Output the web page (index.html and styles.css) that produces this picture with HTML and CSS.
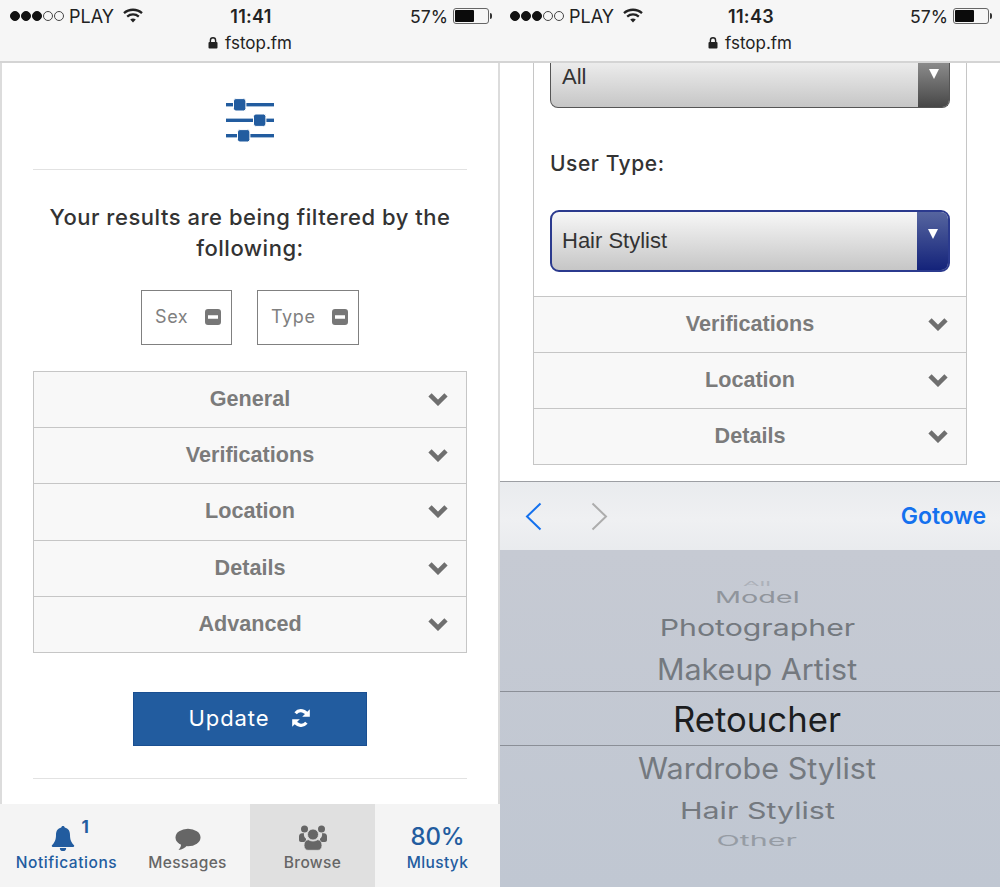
FILE: index.html
```html
<!DOCTYPE html>
<html lang="en">
<head>
<meta charset="utf-8">
<title>fstop.fm filters</title>
<link rel="stylesheet" href="styles.css">
</head>
<body>
<svg class="defs" width="0" height="0" aria-hidden="true">
  <defs>
    <symbol id="wifi" viewBox="0 0 20 15">
      <path d="M1 5.200C6 .6 14 .6 19 5.200" fill="none" stroke="currentColor" stroke-width="2.300"/>
      <path d="M4.200 8.600C7.500 5.700 12.500 5.700 15.800 8.600" fill="none" stroke="currentColor" stroke-width="2.300"/>
      <path d="M7.200 11.400C8.900 10.100 11.100 10.100 12.800 11.400L10 14.400Z" fill="currentColor"/>
    </symbol>
    <symbol id="lock" viewBox="0 0 10 12">
      <path d="M2.400 5V3.400a2.600 2.600 0 0 1 5.200 0V5" fill="none" stroke="currentColor" stroke-width="1.400"/>
      <rect x="0.500" y="5" width="9" height="6.600" rx="1" fill="currentColor"/>
    </symbol>
    <symbol id="chev" viewBox="0 0 20 14">
      <path d="M2 2.800 10 10.800 18 2.800" fill="none" stroke="currentColor" stroke-width="4.600"/>
    </symbol>
    <symbol id="minus" viewBox="0 0 16 16">
      <path fill-rule="evenodd" d="M3 0h10a3 3 0 0 1 3 3v10a3 3 0 0 1-3 3H3a3 3 0 0 1-3-3V3a3 3 0 0 1 3-3ZM3 6.300v3.400h10V6.300Z" fill="currentColor"/>
    </symbol>
  </defs>
</svg>

<main class="screens">
  <section class="phone">
    <header class="browser">
      <div class="status">
        <div class="status-left">
          <span class="signal"><i class="dot"></i><i class="dot"></i><i class="dot"></i><i class="dot off"></i><i class="dot off"></i></span>
          <span class="carrier">PLAY</span>
          <svg class="wifi"><use href="#wifi"/></svg>
        </div>
        <div class="clock">11:41</div>
        <div class="status-right">
          <span>57%</span>
          <span class="battery"><span class="battery-fill"></span></span>
          <span class="battery-tip"></span>
        </div>
      </div>
      <div class="url"><svg class="lock"><use href="#lock"/></svg><span>fstop.fm</span></div>
    </header>

    <div class="page">
      <div class="filter-icon">
        <svg width="48" height="46" viewBox="0 0 48 46">
          <g fill="#225c9f">
            <rect x="0" y="6" width="48" height="3.400"/>
            <rect x="0" y="21.600" width="48" height="3.400"/>
            <rect x="0" y="37" width="48" height="3.400"/>
            <rect x="7.500" y="1.600" width="12.400" height="12.400" rx="2.400" stroke="#fff" stroke-width="1"/>
            <rect x="27.500" y="17" width="12.400" height="12.400" rx="2.400" stroke="#fff" stroke-width="1"/>
            <rect x="11.500" y="32.600" width="12.400" height="12.400" rx="2.400" stroke="#fff" stroke-width="1"/>
          </g>
        </svg>
      </div>
      <hr class="rule">
      <h2 class="lead">Your results are being filtered by the following:</h2>
      <div class="tags">
        <div class="tag tag-sex"><span>Sex</span><svg class="minus"><use href="#minus"/></svg></div>
        <div class="tag tag-type"><span>Type</span><svg class="minus"><use href="#minus"/></svg></div>
      </div>
      <div class="accordion">
        <div class="acc-row"><span>General</span><svg class="chev"><use href="#chev"/></svg></div>
        <div class="acc-row"><span>Verifications</span><svg class="chev"><use href="#chev"/></svg></div>
        <div class="acc-row"><span>Location</span><svg class="chev"><use href="#chev"/></svg></div>
        <div class="acc-row"><span>Details</span><svg class="chev"><use href="#chev"/></svg></div>
        <div class="acc-row"><span>Advanced</span><svg class="chev"><use href="#chev"/></svg></div>
      </div>
      <button class="update" type="button">
        <span>Update</span>
        <svg width="20" height="20" viewBox="0 0 20 20">
          <path d="M16.600 7.600A7 7 0 0 0 4.600 5.200" fill="none" stroke="#fff" stroke-width="3.200"/>
          <path d="M18.800 1.200v7.600h-7.600Z" fill="#fff"/>
          <path d="M3.400 12.400a7 7 0 0 0 12 2.400" fill="none" stroke="#fff" stroke-width="3.200"/>
          <path d="M1.200 18.800v-7.600h7.600Z" fill="#fff"/>
        </svg>
      </button>
      <hr class="rule rule-bottom">
    </div>

    <nav class="tabbar">
      <div class="tab tab-active-blue">
        <div class="tab-icon">
          <svg width="24" height="25" viewBox="0 0 24 25">
            <path d="M12 0c1 0 1.700.7 1.700 1.600 3.600.8 5.300 3.600 5.300 7.400 0 5 1.400 7.400 4 10.200.5.600.2 1.800-.8 1.800H1.800c-1 0-1.300-1.200-.8-1.800C3.600 16.400 5 14 5 9c0-3.800 1.700-6.600 5.300-7.400C10.300.7 11 0 12 0Z" fill="#225c9f"/>
            <path d="M8.800 22h6.400a3.200 3.200 0 0 1-6.400 0Z" fill="#225c9f"/>
          </svg>
          <span class="badge">1</span>
        </div>
        <span class="tab-label tab-label-offset">Notifications</span>
      </div>
      <div class="tab">
        <div class="tab-icon">
          <svg width="26" height="23" viewBox="0 0 26 23">
            <ellipse cx="13" cy="9.500" rx="12.500" ry="8.800" fill="#666"/>
            <path d="M6 15c.5 3-.8 5-2.500 7 3.500-.5 6.500-2 8.500-4.500Z" fill="#666"/>
          </svg>
        </div>
        <span class="tab-label">Messages</span>
      </div>
      <div class="tab tab-current">
        <div class="tab-icon">
          <svg width="28" height="26" viewBox="0 0 28 26">
            <g fill="#666">
              <circle cx="5.500" cy="4" r="3.500"/><circle cx="22.500" cy="4" r="3.500"/>
              <path d="M0 11.500c0-2 1-3.300 3-3.300h2c-.5 2.500.5 4.300 2 5.500v3.300H2c-1.200 0-2-.8-2-2Z"/>
              <path d="M28 11.500c0-2-1-3.300-3-3.300h-2c.5 2.500-.5 4.300-2 5.500v3.300h5c1.200 0 2-.8 2-2Z"/>
              <circle cx="14" cy="9.500" r="5.500" stroke="#e0e0e0" stroke-width=".8"/>
              <path d="M5 20.500c0-3.500 1.500-5.800 4.500-5.800 2.800 1.800 6.200 1.800 9 0 3 0 4.500 2.300 4.500 5.800 0 3-1.800 4.800-4 4.800H9c-2.200 0-4-1.800-4-4.800Z" stroke="#e0e0e0" stroke-width=".8"/>
            </g>
          </svg>
        </div>
        <span class="tab-label">Browse</span>
      </div>
      <div class="tab tab-active-blue">
        <div class="tab-icon tab-score">80%</div>
        <span class="tab-label">Mlustyk</span>
      </div>
    </nav>
  </section>

  <section class="phone">
    <header class="browser">
      <div class="status">
        <div class="status-left">
          <span class="signal"><i class="dot"></i><i class="dot"></i><i class="dot"></i><i class="dot off"></i><i class="dot off"></i></span>
          <span class="carrier">PLAY</span>
          <svg class="wifi"><use href="#wifi"/></svg>
        </div>
        <div class="clock">11:43</div>
        <div class="status-right">
          <span>57%</span>
          <span class="battery"><span class="battery-fill"></span></span>
          <span class="battery-tip"></span>
        </div>
      </div>
      <div class="url"><svg class="lock"><use href="#lock"/></svg><span>fstop.fm</span></div>
    </header>

    <div class="form-page">
      <div class="form-panel">
        <div class="select select-gray">
          <span class="select-value">All</span>
          <span class="select-btn"><i class="tri"></i></span>
        </div>
        <div class="field-label">User Type:</div>
        <div class="select select-focus">
          <span class="select-value">Hair Stylist</span>
          <span class="select-btn"><i class="tri"></i></span>
        </div>
        <div class="panel-rows">
          <div class="acc-row"><span>Verifications</span><svg class="chev"><use href="#chev"/></svg></div>
          <div class="acc-row"><span>Location</span><svg class="chev"><use href="#chev"/></svg></div>
          <div class="acc-row"><span>Details</span><svg class="chev"><use href="#chev"/></svg></div>
        </div>
      </div>
    </div>

    <div class="toolbar">
      <svg class="nav-arrow prev" width="17" height="29" viewBox="0 0 17 29"><path d="M15.500 1.500 2 14.500l13.500 13" fill="none" stroke="currentColor" stroke-width="2"/></svg>
      <svg class="nav-arrow next" width="17" height="29" viewBox="0 0 17 29"><path d="M1.500 1.500 15 14.500l-13.500 13" fill="none" stroke="currentColor" stroke-width="2"/></svg>
      <span class="done">Gotowe</span>
    </div>

    <div class="picker">
      <div class="wheel">
        <div class="item i-all"><span>All</span></div>
        <div class="item i-model"><span>Model</span></div>
        <div class="item i-photo"><span>Photographer</span></div>
        <div class="item i-makeup"><span>Makeup Artist</span></div>
        <div class="item i-current"><span>Retoucher</span></div>
        <div class="item i-ward"><span>Wardrobe Stylist</span></div>
        <div class="item i-hair"><span>Hair Stylist</span></div>
        <div class="item i-other"><span>Other</span></div>
      </div>
    </div>
  </section>
</main>
</body>
</html>
```

FILE: styles.css
```css
* { box-sizing: border-box; }

html, body {
  margin: 0;
  padding: 0;
  height: 887px;
  overflow: hidden;
  background: #fff;
}

body {
  font-family: "Liberation Sans", Arial, sans-serif;
  color: #333;
}

.defs { display: block; height: 0; }

.screens {
  display: flex;
  width: 1000px;
  height: 887px;
}

.phone {
  width: 500px;
  height: 887px;
  display: flex;
  flex-direction: column;
  overflow: hidden;
}

/* Browser chrome */
.browser {
  flex: 0 0 63px;
  height: 63px;
  background: #f6f6f6;
  border-bottom: 2px solid #d4d4d4;
  padding: 4px 8px 0 10px;
  color: #222;
}

.status {
  display: grid;
  grid-template-columns: 1fr auto 1fr;
  align-items: center;
  height: 24px;
  font-family: Inter, "Liberation Sans", sans-serif;
  font-size: 18px;
}

.status-left { display: flex; align-items: center; }

.signal { display: flex; gap: 1px; margin-right: 5px; }

.dot {
  width: 10px;
  height: 10px;
  border-radius: 50%;
  background: #111;
  border: 1px solid #111;
}

.dot.off { background: transparent; border-color: #444; }

.carrier { font-weight: 400; }

.wifi { width: 20px; height: 15px; margin-left: 9px; margin-top: -2px; }

.clock { font-weight: 600; font-size: 18px; letter-spacing: .3px; }

.status-right {
  display: flex;
  align-items: center;
  justify-content: flex-end;
  font-size: 17.600px;
}

.battery {
  width: 36px;
  height: 16px;
  margin-left: 5px;
  border: 1px solid #666;
  border-radius: 3px;
  padding: 1px;
  display: block;
}

.battery-fill {
  display: block;
  width: 19px;
  height: 100%;
  background: #0b0b0b;
  border-radius: 1px;
}

.battery-tip {
  width: 2px;
  height: 6px;
  background: #333;
  border-radius: 0 2px 2px 0;
  margin-left: 1px;
}

.url {
  display: flex;
  justify-content: center;
  align-items: center;
  gap: 7px;
  height: 28px;
  padding-top: 2px;
  margin-left: -2px;
  font-family: Inter, "Liberation Sans", sans-serif;
  font-size: 17px;
}

.lock { width: 10px; height: 12px; }

/* Left page */
.page {
  flex: 1;
  min-height: 0;
  background: #fff;
  border-left: 2px solid #dcdcdc;
  border-right: 2px solid #dcdcdc;
  padding: 0 31px;
  font-family: Inter, "Liberation Sans", sans-serif;
}

.filter-icon {
  display: flex;
  justify-content: center;
  height: 106px;
  padding-top: 34px;
}

.rule {
  margin: 0;
  border: 0;
  height: 1px;
  background: #e2e2e2;
}

.lead {
  margin: 32px 0 26px;
  padding: 0;
  text-align: center;
  font-size: 22px;
  line-height: 31px;
  font-weight: 500;
  letter-spacing: .52px;
  color: #333;
}

.tags {
  display: flex;
  justify-content: center;
  gap: 25px;
  margin-bottom: 26px;
}

.tag {
  display: flex;
  align-items: center;
  justify-content: space-between;
  height: 55px;
  padding: 0 10px 2px 13px;
  border: 1px solid #808080;
  font-size: 18px;
  letter-spacing: .6px;
  color: #808080;
}

.tag-sex { width: 91px; }
.tag-type { width: 102px; }

.minus { width: 16px; height: 16px; color: #777; }

.accordion { border: 1px solid #c6c6c6; border-bottom: 0; }

.acc-row {
  position: relative;
  display: flex;
  align-items: center;
  justify-content: center;
  height: 56.200px;
  padding-bottom: 1px;
  background: #f8f8f8;
  border-bottom: 1px solid #c6c6c6;
  font-family: "Liberation Sans", Arial, sans-serif;
  font-weight: 700;
  font-size: 21.600px;
  color: #7b7b7b;
}

.chev {
  position: absolute;
  right: 18px;
  top: 20px;
  width: 20px;
  height: 14px;
  color: #6f6f6f;
}

.update {
  display: flex;
  align-items: center;
  justify-content: center;
  gap: 22px;
  width: 234px;
  height: 54px;
  margin: 39px auto 32px;
  padding: 0 0 2px;
  background: #225c9f;
  border: 1px solid #1a4f91;
  color: #fff;
  font-family: Inter, "Liberation Sans", sans-serif;
  font-size: 22px;
  font-weight: 400;
  letter-spacing: .9px;
}

/* Tab bar */
.tabbar {
  flex: 0 0 83px;
  display: grid;
  grid-template-columns: repeat(4, 125px);
  background: #f4f4f4;
  font-family: Inter, "Liberation Sans", sans-serif;
}

.tab {
  display: flex;
  flex-direction: column;
  align-items: center;
  color: #666;
}

.tab-current { background: #e0e0e0; }
.tab-active-blue { color: #225c9f; }

.tab-icon {
  position: relative;
  height: 47px;
  display: flex;
  align-items: flex-end;
  justify-content: center;
}

.badge {
  position: absolute;
  left: 31px;
  top: 13px;
  font-size: 17px;
  font-weight: 700;
}

.tab-score {
  font-size: 24px;
  font-weight: 500;
  line-height: 29px;
  letter-spacing: -.1px;
}

.tab-label {
  margin-top: 1px;
  font-size: 15.500px;
  font-weight: 500;
  line-height: 22px;
  letter-spacing: .35px;
}

.tab-label-offset { margin-left: 8px; letter-spacing: .55px; }

/* Right form */
.form-page {
  height: 419px;
  background: #fff;
  padding: 0 33px;
  border-bottom: 1px solid #9c9ea3;
  font-family: Inter, "Liberation Sans", sans-serif;
}

.form-panel {
  border-left: 1px solid #c6c6c6;
  border-right: 1px solid #c6c6c6;
}

.select {
  position: relative;
  margin: 0 16px;
  display: flex;
  align-items: center;
  justify-content: space-between;
  background: linear-gradient(#f7f7f7, #c6c6c6);
  font-family: "Liberation Sans", Arial, sans-serif;
  font-size: 22px;
  color: #333;
  overflow: hidden;
}

.select-gray {
  height: 45px;
  border: 1px solid #555;
  border-top: 0;
  border-radius: 0 0 8px 8px;
  background: linear-gradient(#ececec, #c6c6c6);
}

.select-focus {
  height: 62px;
  border: 2px solid #2b3a8e;
  border-radius: 9px;
}

.select-value { padding-left: 11px; }

.select-focus .select-value { padding-left: 10px; }

.select-gray .select-value { margin-top: -16px; }

.select-btn {
  align-self: stretch;
  width: 31px;
  display: flex;
  justify-content: center;
  padding-top: 17px;
}

.select-gray .select-btn {
  background: linear-gradient(#8b8b8b, #474747);
  padding-top: 6px;
}

.select-focus .select-btn {
  background: linear-gradient(#56659f, #14237a);
}

.tri {
  width: 0;
  height: 0;
  border-left: 5.500px solid transparent;
  border-right: 5.500px solid transparent;
  border-top: 10px solid #fff;
}

.field-label {
  margin: 41px 16px 32px;
  font-size: 21px;
  line-height: 29px;
  font-weight: 500;
  letter-spacing: .55px;
  color: #333;
}

.panel-rows { margin-top: 24px; border-top: 1px solid #c6c6c6; }

.panel-rows .acc-row { height: 56px; }

/* Keyboard toolbar + picker */
.toolbar {
  flex: 0 0 68px;
  display: flex;
  align-items: center;
  background: linear-gradient(#e9ebee, #eff0f2 55%, #e9ebee);
  padding: 0 14px 0 25px;
}

.nav-arrow { display: block; }
.prev { color: #1471ee; }
.next { color: #adadad; margin-left: 49px; }

.done {
  margin-left: auto;
  font-family: Inter, "Liberation Sans", sans-serif;
  font-size: 23px;
  font-weight: 600;
  color: #1471ee;
}

.picker {
  flex: 1;
  background: linear-gradient(#c6cad3, #c0c7d2);
  padding-top: 29px;
  font-family: Inter, "Liberation Sans", sans-serif;
  overflow: hidden;
}

.wheel { display: flex; flex-direction: column; }

.item {
  display: flex;
  justify-content: center;
  align-items: center;
  padding-left: 14px;
  white-space: nowrap;
  color: #74797f;
}

.item span { display: block; }

.i-all { height: 8px; overflow: hidden; font-size: 24px; opacity: .3; }
.i-all span { transform: scale(1, .28); }

.i-model { height: 21px; font-size: 24px; opacity: .65; }
.i-model span { transform: scale(1.2, .67); }

.i-photo { height: 39px; font-size: 28px; }
.i-photo span { transform: scale(1.08, .83); }

.i-makeup { height: 44px; padding-bottom: 2px; font-size: 30.500px; }
.i-makeup span { transform: scaleY(.97); }

.i-current {
  height: 55px;
  font-size: 34.700px;
  color: #1c1d20;
  border-top: 1px solid #8b8f97;
  border-bottom: 1px solid #8b8f97;
}

.i-ward { height: 45px; padding-bottom: 2px; font-size: 30.500px; }
.i-ward span { transform: scaleY(.97); }

.i-hair { height: 39px; font-size: 28px; }
.i-hair span { transform: scale(1.085, .83); }

.i-other { height: 20px; font-size: 24px; opacity: .55; }
.i-other span { transform: scale(1.27, .62); }
```
